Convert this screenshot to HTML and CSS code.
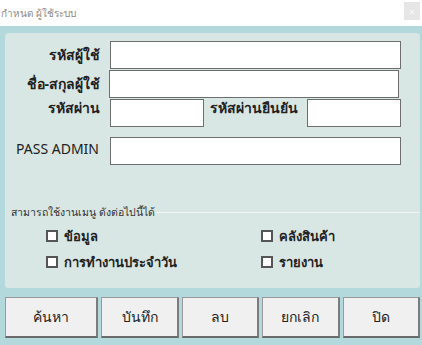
FILE: index.html
```html
<!DOCTYPE html>
<html lang="th">
<head>
    <meta charset="UTF-8">
    <meta name="viewport" content="width=device-width, initial-scale=1.0">
    <title>กำหนด ผู้ใช้ระบบ</title>
    <link rel="stylesheet" href="styles.css">
</head>
<body>
    <div class="titlebar">
        <span class="title">กำหนด ผู้ใช้ระบบ</span>
        <span class="close">×</span>
    </div>

    <div class="window">
        <div class="panel">
            <div class="row">
                <label class="label">รหัสผู้ใช้</label>
                <input type="text" class="field field-wide">
            </div>
            <div class="row row-name">
                <label class="label">ชื่อ-สกุลผู้ใช้</label>
                <input type="text" class="field field-name">
            </div>
            <div class="row row-pass">
                <label class="label">รหัสผ่าน</label>
                <input type="password" class="field field-short">
                <label class="label-confirm">รหัสผ่านยืนยัน</label>
                <input type="password" class="field field-short">
            </div>
            <div class="row row-admin">
                <label class="label-admin">PASS ADMIN</label>
                <input type="password" class="field field-wide">
            </div>
        </div>

        <div class="group">
            <div class="legend">
                <span>สามารถใช้งานเมนู ดังต่อไปนี้ได้</span>
            </div>
            <div class="menus">
                <label class="check"><span class="box"></span>ข้อมูล</label>
                <label class="check"><span class="box"></span>คลังสินค้า</label>
                <label class="check"><span class="box"></span>การทำงานประจำวัน</label>
                <label class="check"><span class="box"></span>รายงาน</label>
            </div>
        </div>

        <div class="buttons">
            <button class="btn btn-first">ค้นหา</button>
            <button class="btn">บันทึก</button>
            <button class="btn">ลบ</button>
            <button class="btn">ยกเลิก</button>
            <button class="btn">ปิด</button>
        </div>
    </div>
</body>
</html>
```

FILE: styles.css
```css
body {
    margin: 0;
    width: 422px;
    height: 345px;
    overflow: hidden;
    font-family: "Noto Sans", "Liberation Sans", sans-serif;
    background-color: #b3d9dd;
    color: #222;
}

.titlebar {
    height: 26px;
    display: flex;
    align-items: center;
    justify-content: space-between;
    background-color: #fff;
}

.title {
    padding-left: 1px;
    font-size: 10px;
    color: #8a8a8a;
}

.close {
    width: 16px;
    height: 18px;
    margin-right: 2px;
    margin-top: -4px;
    display: flex;
    align-items: center;
    justify-content: center;
    background-color: #e6e6e6;
    color: #fafafa;
    font-size: 11px;
}

.window {
    padding: 7px 2px 0 5px;
}

.panel {
    height: 159px;
    padding-top: 8px;
    background-color: #d8e6e4;
    border-radius: 4px 4px 0 0;
}

.row {
    display: flex;
    align-items: center;
    height: 28px;
}

.label {
    width: 95px;
    margin-right: 10px;
    text-align: right;
    font-size: 14px;
    font-weight: bold;
}

.field {
    box-sizing: border-box;
    height: 28px;
    margin: 0;
    padding: 0 4px;
    border: 1px solid #6e6e6e;
    background-color: #fff;
}

.field-wide {
    width: 291px;
}

.row-name {
    margin-top: 1px;
}

.row-name .label {
    margin-right: 9px;
}

.field-name {
    width: 290px;
}

.row-pass {
    align-items: flex-start;
    margin-top: 1px;
}

.row-pass .label,
.label-confirm {
    margin-top: -2px;
}

.field-short {
    width: 94px;
}

.label-confirm {
    width: 97px;
    padding-left: 6px;
    font-size: 14px;
    font-weight: bold;
}

.row-admin {
    margin-top: 10px;
}

.label-admin {
    width: 94px;
    padding-left: 11px;
    margin-top: -5px;
    font-size: 14px;
}

.group {
    height: 88px;
    background-color: #d8e6e4;
    border-radius: 0 0 3px 3px;
}

.legend {
    display: flex;
    align-items: center;
    height: 24px;
    padding-left: 6px;
    font-size: 10.5px;
    color: #333;
}

.legend::after {
    content: "";
    flex: 1;
    height: 1px;
    margin-top: 1px;
    background-color: #f1f6f5;
}

.menus {
    display: grid;
    grid-template-columns: 215px 1fr;
    row-gap: 6px;
    padding: 2px 0 0 41px;
}

.check {
    display: flex;
    align-items: center;
    height: 20px;
    font-size: 13px;
    font-weight: bold;
}

.box {
    box-sizing: border-box;
    width: 12px;
    height: 12px;
    margin-right: 6px;
    border: 2px solid #555;
    background-color: #fff;
}

.buttons {
    display: flex;
    gap: 3px;
    margin-top: 9px;
}

.btn {
    box-sizing: border-box;
    width: 78px;
    height: 41px;
    padding: 0;
    border: 1px solid #9a9a9a;
    border-right: 2px solid #7c7c7c;
    border-bottom: 2px solid #6a6a6a;
    background-color: #f0f0f0;
    font-family: "Noto Sans", "Liberation Sans", sans-serif;
    font-size: 14px;
    color: #222;
}

.btn-first {
    width: 94px;
}
```
